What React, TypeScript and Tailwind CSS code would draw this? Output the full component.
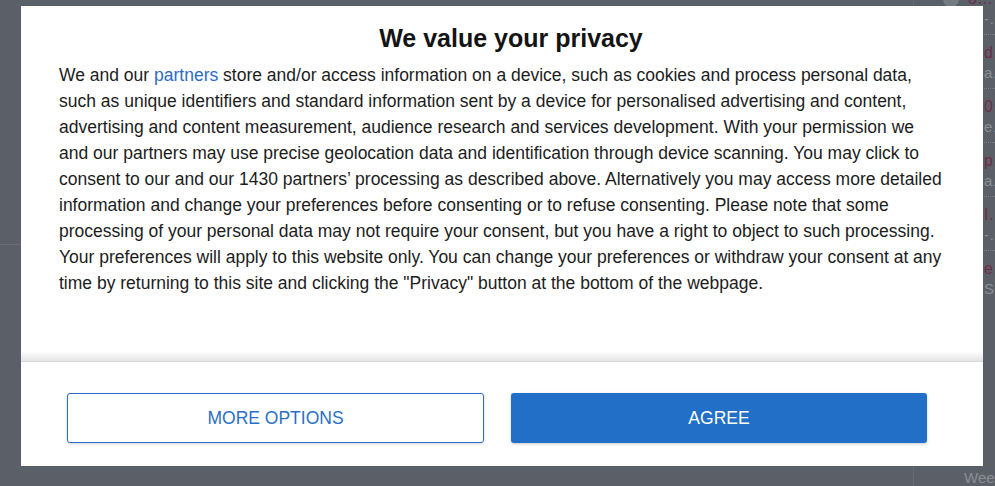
// what peeks out of the sidebar to the right of the dialog
const FEED = [
  { title: 'dagblad van vandaag', meta: 'a  · 2 uur' },
  { title: '0 comments on this', meta: 'etTweede Kamer' },
  { title: 'perspectief nieuws', meta: 'a  · 5 uur' },
  { title: 'IPTV aanbod', meta: '- + meer' },
  { title: 'ervaring delen', meta: 'S  · gisteren' },
]

const font = 'font-["Liberation_Sans",Arial,sans-serif]'

function Sidebar() {
  return (
    <aside className="flex w-[82px] shrink-0 flex-col overflow-hidden border-l border-[#676c73]">
      <div className="mt-[-19px]">
        <div className="relative border-b border-dotted border-[#7b8087] pt-[8px] pb-[5px] pl-[54px]">
          <span className="absolute top-[10px] left-[29px] h-[16px] w-[16px] rounded-full bg-[#767b82]" />
          <p className="truncate text-[16px] leading-[20px] text-[#6f2d4b]">ontrole</p>
          <p className="truncate pl-[16px] text-[15px] leading-[20px] text-[#8a8f95]">- + meer</p>
        </div>
        {FEED.map((item) => (
          <div
            key={item.title}
            className="border-b border-dotted border-[#7b8087] pt-[8px] pb-[5px] pl-[70px] last:border-b-0"
          >
            <p className="truncate text-[16px] leading-[20px] text-[#6f2d4b]">{item.title}</p>
            <p className="truncate text-[15px] leading-[20px] text-[#8a8f95]">{item.meta}</p>
          </div>
        ))}
      </div>
      <p className="mt-auto pl-[50px] text-[15px] leading-[16px] text-[#8a8f95]">Weer</p>
    </aside>
  )
}

function ConsentDialog() {
  return (
    <div className="absolute top-[6px] left-[21px] flex h-[460px] w-[962px] flex-col bg-white">
      <div className="flex flex-1 flex-col">
        <div className="pt-[17px] pr-[30px] pl-[38px]">
          <h2 className="pl-[10px] text-center text-[25px] leading-[30px] font-bold text-[#141414]">
            We value your privacy
          </h2>
          {/* the lines break where the reference breaks them */}
          <p className="mt-[9px] text-[17.5px] leading-[26px] text-[#1c1c1c]">
            We and our <a className="text-[#2b6dc2]">partners</a> store and/or access information on a
            device, such as cookies and process personal data,
            <br />
            such as unique identifiers and standard information sent by a device for personalised
            advertising and content,
            <br />
            advertising and content measurement, audience research and services development. With your
            permission we
            <br />
            and our partners may use precise geolocation data and identification through device
            scanning. You may click to
            <br />
            consent to our and our 1430 partners’ processing as described above. Alternatively you may
            access more detailed
            <br />
            information and change your preferences before consenting or to refuse consenting. Please
            note that some
            <br />
            processing of your personal data may not require your consent, but you have a right to
            object to such processing.
            <br />
            Your preferences will apply to this website only. You can change your preferences or
            withdraw your consent at any
            <br />
            time by returning to this site and clicking the "Privacy" button at the bottom of the
            webpage.
          </p>
        </div>
        <div className="mt-auto h-[10px] bg-linear-to-b from-white to-[#e4e4e4]" />
      </div>
      <div className="flex h-[105px] shrink-0 gap-[27px] border-t border-[#d8d8d8] pt-[31px] pr-[56px] pl-[46px]">
        <button
          type="button"
          className="h-[50px] w-[417px] rounded-[3px] border border-[#2c6fc2] bg-white text-[17.5px] text-[#2a6fc6] shadow-[0_1px_3px_rgba(0,0,0,0.18)]"
        >
          MORE OPTIONS
        </button>
        <button
          type="button"
          className="h-[50px] w-[416px] rounded-[3px] bg-[#216fc6] text-[17.5px] text-white shadow-[0_1px_3px_rgba(0,0,0,0.22)]"
        >
          AGREE
        </button>
      </div>
    </div>
  )
}

export default function App() {
  return (
    <div className={`relative flex h-[486px] w-full overflow-hidden bg-[#5b6068] ${font}`}>
      <main className="flex-1">
        <div className="h-[245px] border-b border-[#686d74]" />
      </main>
      <Sidebar />
      <ConsentDialog />
    </div>
  )
}
